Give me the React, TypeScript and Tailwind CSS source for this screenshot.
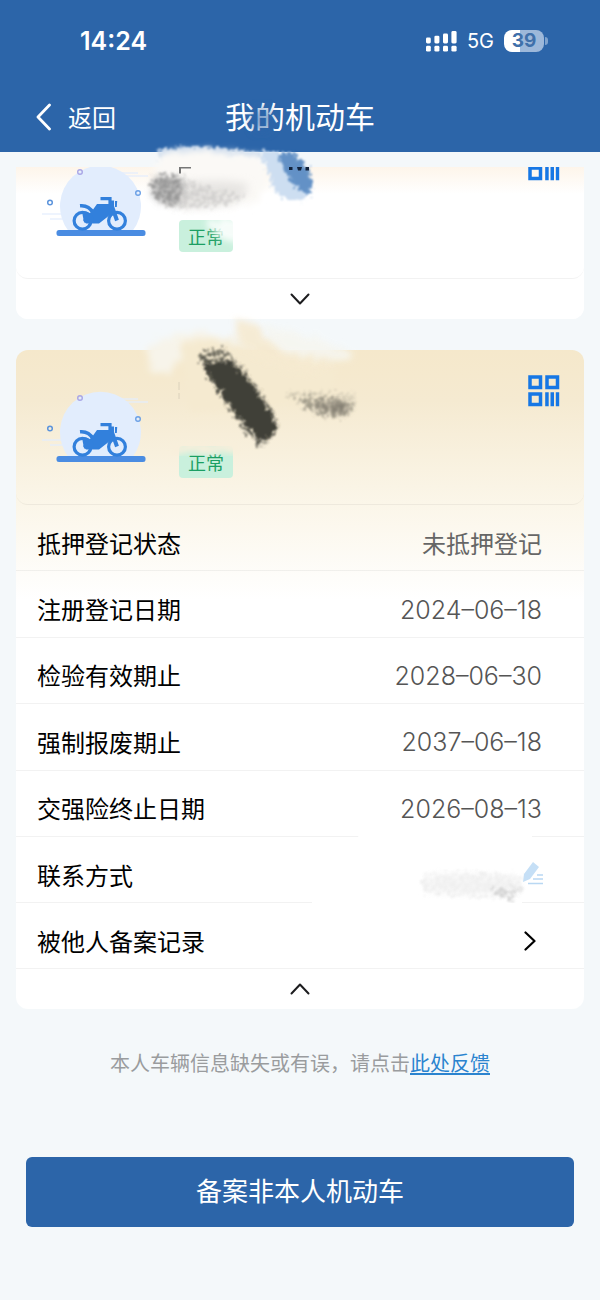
import type { ReactNode } from 'react';

// Registration details of the expanded vehicle
const details = [
  { label: '抵押登记状态', value: '未抵押登记' },
  { label: '注册登记日期', value: '2024–06–18', isDate: true },
  { label: '检验有效期止', value: '2028–06–30', isDate: true },
  { label: '强制报废期止', value: '2037–06–18', isDate: true },
  { label: '交强险终止日期', value: '2026–08–13', isDate: true },
];

function StatusBar() {
  return (
    <div className="flex h-[82px] items-center justify-between pl-20 pr-[52px] font-['Inter',sans-serif]">
      <span className="text-[25px] font-semibold leading-8">14:24</span>
      <div className="flex items-center">
        <svg width="31" height="21" viewBox="0 0 31 21" fill="#fff" aria-hidden="true">
          <rect x="0" y="6.5" width="4.8" height="6" rx="1.4" />
          <rect x="8.4" y="4.7" width="5" height="7.8" rx="1.4" />
          <rect x="17" y="2.5" width="5" height="10" rx="1.4" />
          <rect x="25.4" y="0" width="5.2" height="12.5" rx="1.4" />
          <rect x="0" y="14.8" width="4.8" height="5.800" rx="1.4" />
          <rect x="8.4" y="14.8" width="5" height="5.800" rx="1.4" />
          <rect x="17" y="14.8" width="5" height="5.800" rx="1.4" />
          <rect x="25.4" y="14.8" width="5.2" height="5.800" rx="1.4" />
        </svg>
        <span className="ml-2.5 text-[20px] leading-8">5G</span>
        <div className="ml-2.5 flex items-center gap-px">
          <span className="flex h-[22px] w-10 items-center justify-center rounded-[8px] bg-linear-to-r from-white from-40% to-[#9db8da] to-40% text-[19px] font-bold leading-6 text-[#4070aa]">
            39
          </span>
          <span className="h-2 w-[3px] rounded-r-full bg-[#7fa3cf]" />
        </div>
      </div>
    </div>
  );
}

function NavBar() {
  return (
    <div className="grid h-[70px] grid-cols-3 items-center px-9">
      <button type="button" className="flex items-center gap-[17px] justify-self-start text-[24px] leading-8">
        <svg width="15" height="28" viewBox="0 0 15 28" fill="none" stroke="#fff" strokeWidth="2.8" strokeLinecap="round" strokeLinejoin="round" aria-hidden="true">
          <path d="M13.5 2 2 14l11.5 12" />
        </svg>
        <span>返回</span>
      </button>
      <h1 className="justify-self-center whitespace-nowrap pb-1 text-[30px] leading-10">我的机动车</h1>
    </div>
  );
}

function MotorcycleScene() {
  return (
    <svg width="110" height="80" viewBox="0 0 110 80" fill="none" aria-hidden="true">
      <path d="M28.500 72a40.500 40.500 0 1 1 64 0z" fill="#e2edfd" />
      <path d="M84 17h24M78 14h20M2 55h24M10 60h18" stroke="#e2edfd" strokeWidth="1.800" opacity="0.600" />
      <circle cx="40" cy="13" r="2.300" stroke="#a9a6e6" strokeWidth="1.400" />
      <circle cx="98" cy="34" r="2.300" stroke="#6ba0e6" strokeWidth="1.400" />
      <circle cx="10" cy="43.500" r="2.300" stroke="#5c94dc" strokeWidth="1.500" />
      <rect x="16.500" y="71" width="89" height="6" rx="2.500" fill="#4a8ce2" />
      <g stroke="#3280dc">
        <circle cx="42.500" cy="61.700" r="8.400" strokeWidth="3.200" />
        <circle cx="77" cy="61.700" r="8.400" strokeWidth="3.200" />
        <path d="M40 46.800c6-.6 10 1.400 13 7" strokeWidth="3.600" />
        <path d="M60.500 39.700H70v8" strokeWidth="3.200" />
        <path d="M71.500 46l5.500 15.500" strokeWidth="4" />
      </g>
      <path d="M57 45h15.500l2.500 7L59 64.500H46l-3-3.500 9-9z" fill="#3280dc" />
      <path d="M69.500 41.500H74v8h-4.500zM75 42h2.200l-.4 6H75z" fill="#3280dc" />
      <path d="M42 52.500c7-1 12 4 12 11h-10z" fill="#3280dc" />
    </svg>
  );
}

function QrButton() {
  return (
    <button type="button" aria-label="二维码" className="mt-[25px] ml-auto">
      <svg width="32" height="32" viewBox="0 0 32 32" aria-hidden="true">
        <g fill="none" stroke="#1677e5" strokeWidth="3.500">
          <rect x="2" y="2" width="10.500" height="10.500" />
          <rect x="19" y="2" width="10.500" height="10.500" />
          <rect x="2" y="19" width="10.500" height="10.500" />
        </g>
        <path d="M17.200 17.200h3.500v14h-3.500zM22.500 17.200h3.500v14h-3.500zM27.800 17.200h3.400v14h-3.400z" fill="#1677e5" />
      </svg>
    </button>
  );
}

function VehicleHeader() {
  return (
    <div className="flex min-h-[155px] items-start rounded-b-xl border-b border-black/5 pl-6 pr-6">
      <div className="mt-[35px] shrink-0">
        <MotorcycleScene />
      </div>
      <span className="mt-24 ml-[29px] rounded-[4px] bg-[#c9f0dd] px-[9px] text-[18px] leading-8 text-[#1b9f63]">
        正常
      </span>
      <QrButton />
    </div>
  );
}

function ToggleButton({ open }: { open: boolean }) {
  return (
    <button type="button" aria-label={open ? '收起' : '展开'} className="flex h-10 w-full items-center justify-center">
      <svg width="20" height="12" viewBox="0 0 20 12" fill="none" stroke="#1d1d1f" strokeWidth="2" strokeLinecap="round" strokeLinejoin="round" aria-hidden="true">
        <path d={open ? 'M1.500 10.500 10 1.500l8.500 9' : 'M1.500 1.500l8.500 9 8.500-9'} />
      </svg>
    </button>
  );
}

function DetailRow({ label, children }: { label: string; children: ReactNode }) {
  return (
    <div className="flex items-center justify-between border-b border-black/5 pt-2.5 pl-[21px] pr-[42px]">
      <dt className="text-black">{label}</dt>
      <dd className="text-[#666]">{children}</dd>
    </div>
  );
}

// Filters shared by the brush strokes that hide private data
function BrushFilters() {
  return (
    <svg width="0" height="0" className="absolute" aria-hidden="true">
      <defs>
        <filter id="soft" x="-30%" y="-30%" width="160%" height="160%">
          <feGaussianBlur stdDeviation="5" />
        </filter>
        <filter id="rough" x="-30%" y="-30%" width="160%" height="160%">
          <feTurbulence type="fractalNoise" baseFrequency="0.25" numOctaves="3" seed="4" result="n" />
          <feDisplacementMap in="SourceGraphic" in2="n" scale="12" xChannelSelector="R" yChannelSelector="G" />
          <feGaussianBlur stdDeviation="1" />
        </filter>
        <filter id="feather" x="-30%" y="-30%" width="160%" height="160%">
          <feTurbulence type="fractalNoise" baseFrequency="0.15" numOctaves="3" seed="6" result="n" />
          <feDisplacementMap in="SourceGraphic" in2="n" scale="16" xChannelSelector="R" yChannelSelector="G" />
          <feGaussianBlur stdDeviation="3" />
        </filter>
        <filter id="speckle" x="-30%" y="-30%" width="160%" height="160%">
          <feTurbulence type="fractalNoise" baseFrequency="0.250" numOctaves="3" seed="9" result="n" />
          <feColorMatrix in="n" type="matrix" values="0 0 0 0 0  0 0 0 0 0  0 0 0 0 0  4 0 0 0 -1.400" result="grain" />
          <feDisplacementMap in="SourceGraphic" in2="n" scale="16" xChannelSelector="R" yChannelSelector="G" result="d" />
          <feComposite in="d" in2="grain" operator="in" />
          <feGaussianBlur stdDeviation="0.800" />
        </filter>
      </defs>
    </svg>
  );
}

function TopStrokes() {
  return (
    <svg width="260" height="170" viewBox="120 90 260 170" className="pointer-events-none absolute -top-[77px] left-[104px]" aria-hidden="true">
      <ellipse cx="262" cy="120" rx="11" ry="13" fill="#2c65a9" opacity="0.600" filter="url(#soft)" />
      <path d="M160 150q22-4 46-3 30 2 52 6l10 5-110 1z" fill="#c9d9ec" filter="url(#rough)" />
      <path d="M166 152q30-4 90 4l14 14-10 30-40 10-58-4-8-44z" fill="#fbf9f6" filter="url(#feather)" />
      <path d="M179 167h12v1.500h-10v5h-2z" fill="#777" />
      <path d="M176 184q40-6 72 0 0 16-25 20-30 8-52-2z" fill="#d6d4d2" opacity="0.550" filter="url(#soft)" />
      <path d="M152 176q18-4 32 0l26 12q20 6 38 6-10 10-36 13-30 5-50-1-14-10-10-30z" fill="#c4c3c2" opacity="0.600" filter="url(#speckle)" />
      <path d="M152 180q16-7 30 0 3 12-3 24l-18 1q-11-10-9-25z" fill="#a2a2a2" opacity="0.700" filter="url(#feather)" />
      <path d="M152 178q16-5 30 0 3 14-3 26l-18-2q-11-12-9-24z" fill="#8c8c8c" opacity="0.700" filter="url(#speckle)" />
      <path d="M260 150q14 3 28 2 20 14 25 36l-10 12q-20 4-30-12z" fill="#cddef1" filter="url(#rough)" />
      <path d="M276 153h18q17 14 20 30l-5 12q-14-6-22-20z" fill="#4a7fbc" opacity="0.800" filter="url(#rough)" />
      <path d="M289 167h3.500v3H289zM297 167h5l-1 3.500h-3zM305.500 167h3.500v3.500h-3.500z" fill="#12233c" />
      <path d="M205 222q26-8 38-2v24l-14-2-14-8z" fill="#fff" opacity="0.850" filter="url(#feather)" />
    </svg>
  );
}

function MiddleStrokes() {
  return (
    <svg width="260" height="180" viewBox="120 300 260 180" className="pointer-events-none absolute -top-[50px] left-[104px]" aria-hidden="true">
      <path d="M148 348q14-14 50-16l40 8-40 14q-20 4-28 18l-14 2q-12-10-8-26z" fill="#f7f4ea" filter="url(#feather)" />
      <path d="M182 342q24-8 56 2l50 14 50 14-10 30-140 10z" fill="#f5ead0" filter="url(#feather)" />
      <path d="M238 320q16 2 24 12 28 24 70 30l-20 12q-56-8-76-36z" fill="#f6ead0" opacity="0.900" filter="url(#feather)" />
      <path d="M264 326q40 6 90 26l-6 8q-44 2-74-14z" fill="#f6f6f0" opacity="0.900" filter="url(#feather)" />
      <path d="M179 382v8M179 393v6" stroke="#c9c2ae" opacity="0.600" />
      <path d="M197 354q14-5 29-5 36 36 54 76-4 12-20 23-32-34-63-94z" fill="#4a4941" opacity="0.900" filter="url(#speckle)" />
      <path d="M203 364l28-2q28 28 46 64-4 12-17 14-36-38-57-76z" fill="#403f37" filter="url(#rough)" />
      <path d="M286 392q34 0 70 0v16q-10 8-30 10-24-8-40-26z" fill="#b3ad9c" opacity="0.400" filter="url(#speckle)" />
      <path d="M290 396q34 0 66 6-3 14-14 16-26 0-40-16z" fill="#7d796c" opacity="0.600" filter="url(#speckle)" />
      <path d="M312 401q20 0 38 3-2 9-10 11-16 0-28-14z" fill="#6f6b60" opacity="0.600" filter="url(#feather)" />
      <path d="M172 443h70v10h-70z" fill="#f8efdb" filter="url(#feather)" />
    </svg>
  );
}

function ContactStrokes() {
  return (
    <svg width="280" height="100" viewBox="290 816 280 100" className="pointer-events-none absolute -top-[21px] right-[14px]" aria-hidden="true">
      <path d="M362 832h170v12H352zM312 896h210v12H312z" fill="#fff" />
      <path d="M402 819h66" stroke="#fff" strokeWidth="5" opacity="0.700" filter="url(#rough)" />
      <path d="M422 876q50-8 104 0l-12 22q-46 0-90-4z" fill="#e9e9e9" opacity="0.700" filter="url(#speckle)" />
      <path d="M430 876q40-2 90 4l-4 14q-50 0-90-4z" fill="#f0f0f0" opacity="0.700" filter="url(#soft)" />
      <path d="M490 889l34-2-8 12q-16 0-26-10z" fill="#bcbcbc" opacity="0.600" filter="url(#speckle)" />
      <path d="M533 862l6 5-9 12-7 3 1-8z" fill="#c5dff6" />
      <path d="M537 875h6M533 879h10M528 883.500h15" stroke="#b9d8f3" strokeWidth="1.400" />
    </svg>
  );
}

export default function App() {
  return (
    <div className="min-h-screen bg-[#f4f8fa] pb-[73px] font-['Noto_Sans_CJK_SC',sans-serif]">
      <BrushFilters />
      <header className="bg-[#2c65a9] text-white">
        <StatusBar />
        <NavBar />
      </header>

      <main className="px-4 pt-[15px]">
        {/* Collapsed vehicle, partly scrolled under the header */}
        <section className="relative">
          <div className="overflow-hidden rounded-b-xl">
            <div className="-mt-[43px] bg-white bg-linear-to-b from-[#fdf4e8] from-[40px] to-white to-[70px]">
              <VehicleHeader />
              <ToggleButton open={false} />
            </div>
          </div>
          <TopStrokes />
        </section>

        {/* Expanded vehicle */}
        <section className="relative mt-[31px] rounded-xl bg-[linear-gradient(to_bottom,#f5e8cb_0px,#f5ead1_50px,#fbf6e9_154px,#ffffff_250px)]">
          <VehicleHeader />
          <dl className="grid min-h-[332px] auto-rows-fr text-[24px] leading-8">
            {details.map((item) => (
              <DetailRow key={item.label} label={item.label}>
                <span className={item.isDate ? "font-['Inter',sans-serif] text-[25px] font-light text-[#555]" : undefined}>
                  {item.value}
                </span>
              </DetailRow>
            ))}
          </dl>
          <div className="relative flex h-[66px] items-center border-b border-black/5 pt-2.5 pl-[21px] text-[24px] leading-8">
            <span>联系方式</span>
            <ContactStrokes />
          </div>
          <button type="button" className="flex h-[66px] w-full items-center justify-between border-b border-black/5 pt-2.5 pl-[21px] pr-12 text-[24px] leading-8">
            <span>被他人备案记录</span>
            <svg width="12" height="20" viewBox="0 0 12 20" fill="none" stroke="#000" strokeWidth="2.200" strokeLinecap="round" strokeLinejoin="round" aria-hidden="true">
              <path d="M1.500 1.500l9 8.500-9 8.500" />
            </svg>
          </button>
          <ToggleButton open />
          <MiddleStrokes />
        </section>

        <p className="mt-[38px] text-center text-[20px] leading-8 text-[#9a9c9e]">
          本人车辆信息缺失或有误，请点击
          <a href="#feedback" className="text-[#2b84cf] underline underline-offset-2">此处反馈</a>
        </p>

        <div className="mt-[78px] px-2.5">
          <button type="button" className="h-[70px] w-full rounded-[6px] bg-[#2c65a9] pb-1 text-[26px] leading-8 text-white">
            备案非本人机动车
          </button>
        </div>
      </main>
    </div>
  );
}
